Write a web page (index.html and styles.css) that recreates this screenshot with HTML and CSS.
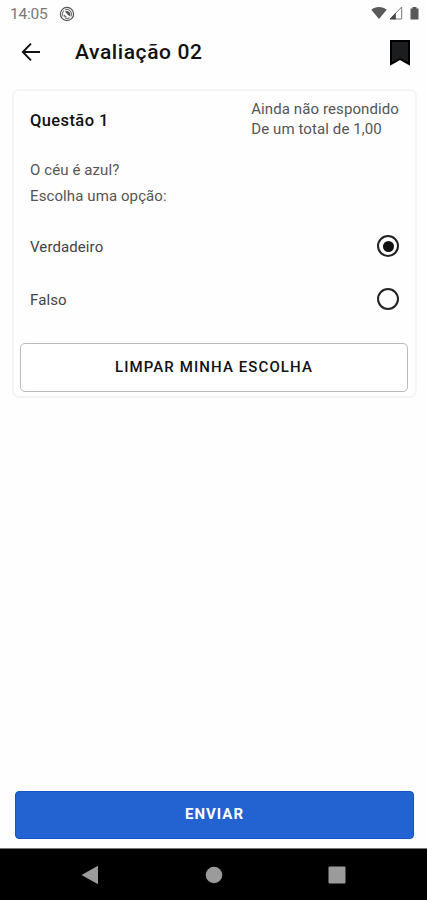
FILE: index.html
```html
<!DOCTYPE html>
<html lang="pt-BR">
<head>
    <meta charset="UTF-8">
    <meta name="viewport" content="width=device-width, initial-scale=1.0">
    <title>Avaliação 02</title>
    <link rel="stylesheet" href="styles.css">
</head>
<body>
    <div class="status-bar">
        <span class="time">14:05</span>
        <svg class="status-app" width="16" height="16" viewBox="0 0 16 16">
            <circle cx="8" cy="8" r="6.6" fill="none" stroke="#555" stroke-width="1.2"/>
            <path d="M4.2 10.5A4.6 4.6 0 0 1 5 4.6M6 3.9a4.6 4.6 0 0 1 5.8 6.6M10.6 11.8a4.6 4.6 0 0 1-4.4.4" fill="none" stroke="#777" stroke-width="1.1"/>
            <path d="M6 5.6a3.6 3.6 0 0 1 5 4.8L8.6 8.6zM4.6 8.2l3.6 3-2.4.2z" fill="#555"/>
        </svg>
        <div class="status-icons">
            <svg width="54" height="16" viewBox="0 0 54 16">
                <path d="M1.3 4.8C5.5 1.2 12.5 1.2 16.7 4.8L9 14z" fill="#595959"/>
                <path d="M20 14L31.7 2v12z" fill="none" stroke="#777" stroke-width="1"/>
                <path d="M19.5 14.2l6.3-6.4v6.4z" fill="#444"/>
                <path d="M40.5 3.5h2V2h4v1.5h2v11h-8z" fill="#595959"/>
            </svg>
        </div>
    </div>

    <header class="header">
        <svg class="back" width="20" height="20" viewBox="0 0 20 20">
            <path d="M19 10H2M10 1.7L1.8 10L10 18.3" fill="none" stroke="#111" stroke-width="1.9"/>
        </svg>
        <h1>Avaliação 02</h1>
        <svg class="bookmark" width="22" height="28" viewBox="0 0 22 28">
            <path d="M2 2h18v23l-9-5.2L2 25z" fill="#1b1d1f" stroke="#000" stroke-width="2"/>
        </svg>
    </header>

    <main>
        <div class="card">
            <div class="card-header">
                <h2>Questão 1</h2>
                <div class="info">Ainda não respondido<br>De um total de 1,00</div>
            </div>
            <div class="question">
                <p>O céu é azul?</p>
                <p>Escolha uma opção:</p>
            </div>
            <div class="option">
                <span>Verdadeiro</span>
                <span class="radio checked"></span>
            </div>
            <div class="option">
                <span>Falso</span>
                <span class="radio"></span>
            </div>
            <button class="clear-btn">LIMPAR MINHA ESCOLHA</button>
        </div>
    </main>

    <button class="send-btn">ENVIAR</button>

    <nav class="nav-bar">
        <svg width="18" height="20" viewBox="0 0 18 20">
            <path d="M0.5 10L17 0.7v18.6z" fill="#9b9b9b"/>
        </svg>
        <svg width="18" height="18" viewBox="0 0 18 18">
            <circle cx="9" cy="9" r="8.3" fill="#9b9b9b"/>
        </svg>
        <svg width="18" height="18" viewBox="0 0 18 18">
            <rect x="0.5" y="0.5" width="17" height="17" rx="1" fill="#9b9b9b"/>
        </svg>
    </nav>
</body>
</html>
```

FILE: styles.css
```css
* {
    box-sizing: border-box;
}

body {
    margin: 0;
    height: 900px;
    display: flex;
    flex-direction: column;
    font-family: Roboto, sans-serif;
    background-color: #fefefe;
    color: #111;
}

h1, h2, p {
    margin: 0;
}

.status-bar {
    height: 28px;
    display: flex;
    align-items: center;
    padding: 0 3px 0 10px;
}

.time {
    font-size: 15.5px;
    letter-spacing: -0.2px;
    color: #777;
    width: 49px;
}

.status-icons {
    margin-left: auto;
    height: 16px;
    margin-top: -2px;
}

.status-app {
    margin-top: -1px;
}

.header {
    height: 50px;
    display: flex;
    align-items: center;
    padding: 0 16px 0 21px;
}

.header h1 {
    margin-left: 34px;
    margin-top: -3px;
    font-size: 21px;
    font-weight: 500;
    letter-spacing: 0.6px;
}

.back {
    margin-top: -2px;
}

.bookmark {
    margin-left: auto;
}

main {
    flex: 1;
    padding: 11px 10px 0 12px;
}

.card {
    height: 309px;
    border: 2px solid #f5f5f5;
    border-radius: 7px;
    padding: 8px 7px 0 6px;
}

.card-header {
    display: flex;
    justify-content: space-between;
    align-items: center;
    padding: 0 9px 0 10px;
}

.card-header h2 {
    font-size: 16.5px;
    font-weight: 500;
    letter-spacing: 0.4px;
    margin-top: 3px;
}

.info {
    font-size: 15px;
    line-height: 20px;
    letter-spacing: 0.1px;
    color: #555;
}

.question {
    margin-top: 18px;
    padding: 0 10px;
    font-size: 15px;
    line-height: 26px;
    letter-spacing: 0.1px;
    color: #555;
}

.option {
    height: 53px;
    display: flex;
    justify-content: space-between;
    align-items: center;
    padding: 0 9px 0 10px;
    font-size: 15px;
    letter-spacing: 0.1px;
    color: #444;
}

.question + .option {
    margin-top: 11px;
}

.radio {
    width: 22px;
    height: 22px;
    margin-bottom: 1px;
    border: 2px solid #222;
    border-radius: 50%;
    display: flex;
    align-items: center;
    justify-content: center;
}

.radio.checked::before {
    content: "";
    width: 11px;
    height: 11px;
    border-radius: 50%;
    background-color: #111;
}

.clear-btn {
    display: block;
    width: 100%;
    height: 49px;
    margin-top: 17px;
    padding-bottom: 3px;
    background-color: #fff;
    border: 1px solid #bbb;
    border-radius: 5px;
    font-family: inherit;
    font-size: 15px;
    font-weight: 500;
    letter-spacing: 1.1px;
    color: #111;
}

.send-btn {
    height: 48px;
    margin: 0 13px 9px 15px;
    padding-bottom: 3px;
    background-color: #2362d1;
    border: 1px solid #1450c8;
    border-radius: 4px;
    font-family: inherit;
    font-size: 15px;
    font-weight: 700;
    letter-spacing: 1px;
    color: #fff;
}

.nav-bar {
    height: 52px;
    display: flex;
    justify-content: space-between;
    align-items: center;
    padding: 0 81px;
    background-color: #000;
    border-top: 1px solid #777;
}
```
